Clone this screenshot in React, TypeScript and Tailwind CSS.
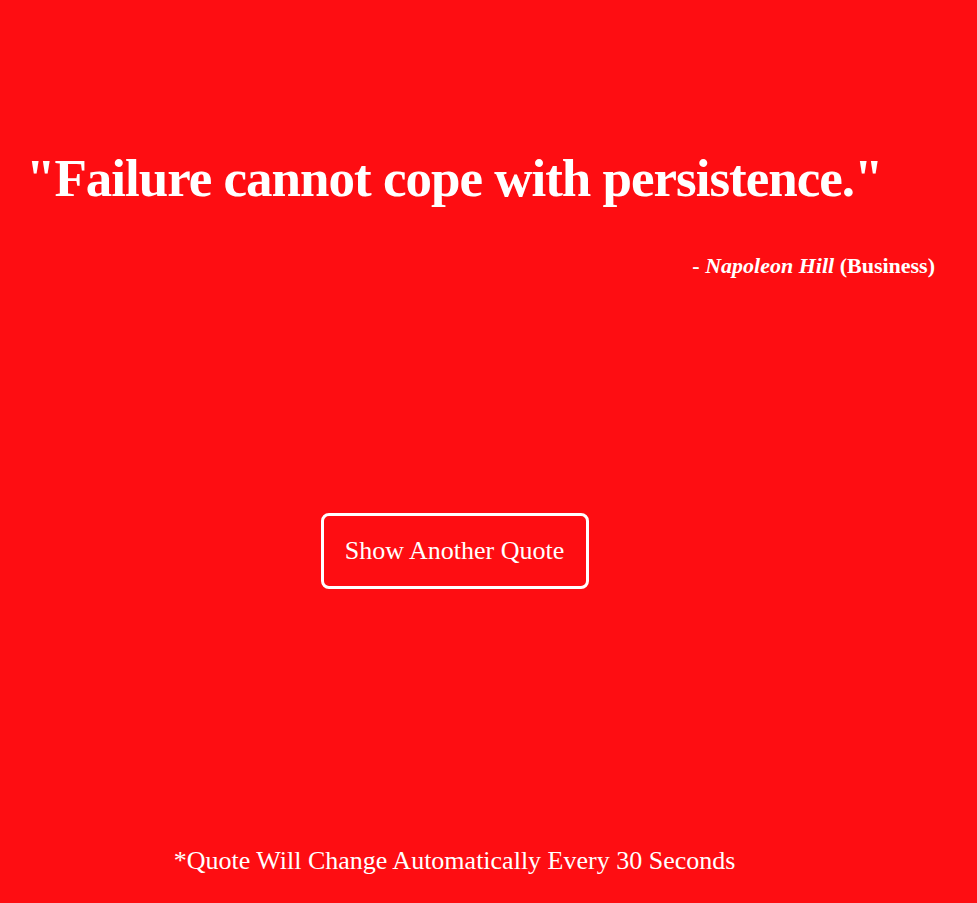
export default function App() {
  return (
    <div className="min-h-[903px] w-full bg-[#fe0d12] text-white font-['Liberation_Serif',serif]">
      <div className="flex w-[909px] flex-col">
        <h1 className="mt-[143px] whitespace-nowrap pl-[26px] text-[53px] font-bold leading-[70px] tracking-[-1px]">
          "Failure cannot cope with persistence."
        </h1>
        <p className="mr-[-26px] mt-[39px] text-right text-[22px] font-bold leading-[28px]">
          - <em>Napoleon Hill</em> (Business)
        </p>
        <div className="mt-[233px] flex justify-center">
          <button className="h-[76px] w-[268px] rounded-[8px] border-[3px] border-white text-[26px] leading-none">
            Show Another Quote
          </button>
        </div>
        <p className="mt-[256px] whitespace-nowrap text-center text-[26px] leading-[32px]">
          *Quote Will Change Automatically Every 30 Seconds
        </p>
      </div>
    </div>
  )
}
